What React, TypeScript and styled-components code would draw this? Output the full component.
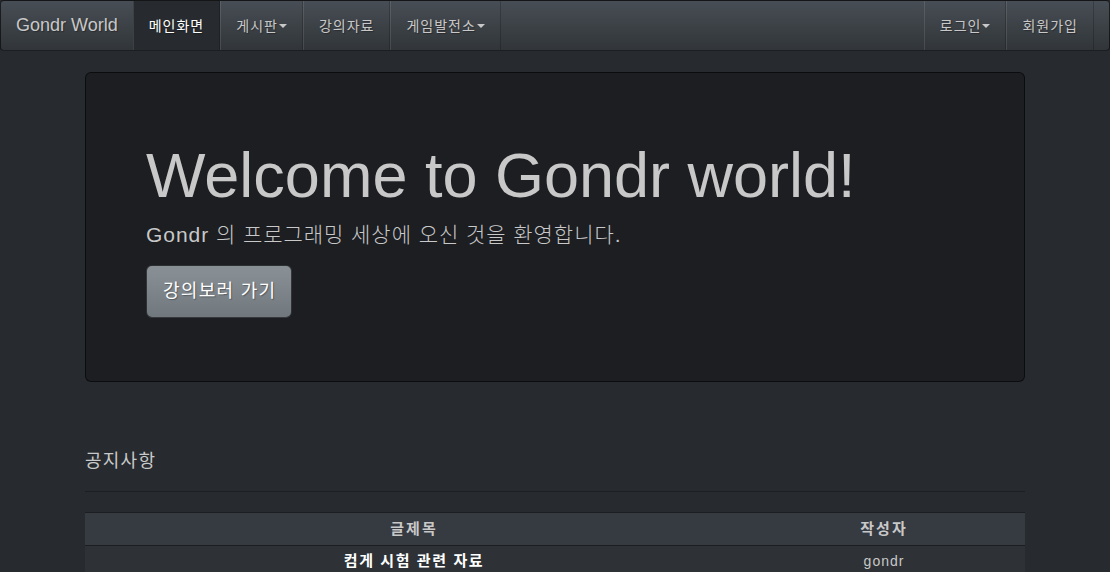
import React from "react";
import styled, { createGlobalStyle } from "styled-components";

const Global = createGlobalStyle`
  html, body { margin: 0; padding: 0; }
  body {
    background: #272b30;
    color: #c8c8c8;
    font-family: "Liberation Sans", "Noto Sans CJK KR", Arial, sans-serif;
    font-size: 14px;
    line-height: 1.42857;
  }
  * { box-sizing: border-box; }
`;

const Navbar = styled.nav`
  display: flex;
  justify-content: space-between;
  height: 51px;
  background-image: linear-gradient(#484e55, #3a3f44 60%, #313539);
  border: 1px solid rgba(0, 0, 0, 0.6);
  border-radius: 4px;
  text-shadow: 1px 1px 1px rgba(0, 0, 0, 0.3);
  padding-right: 15px;
`;

const NavGroup = styled.ul`
  display: flex;
  margin: 0;
  padding: 0;
  list-style: none;
`;

const Brand = styled.a`
  display: flex;
  align-items: center;
  height: 49px;
  padding: 0 15px;
  font-size: 18px;
  color: #c8c8c8;
  text-decoration: none;
`;

const NavItem = styled.li<{ $active?: boolean }>`
  display: flex;
  align-items: center;
  height: 49px;
  padding: 0 15px;
  border-left: 1px solid rgba(255, 255, 255, 0.1);
  border-right: 1px solid rgba(0, 0, 0, 0.2);
  color: ${(p) => (p.$active ? "#ffffff" : "#c8c8c8")};
  background: ${(p) => (p.$active ? "#272b2f" : "transparent")};
  line-height: 20px;
  font-size: 14px;
  letter-spacing: 1px;
`;

const Caret = styled.span`
  display: inline-block;
  width: 0;
  height: 0;
  margin-left: 1px;
  border-top: 4px solid currentColor;
  border-left: 4px solid transparent;
  border-right: 4px solid transparent;
  vertical-align: middle;
`;

const Container = styled.div`
  width: 940px;
  margin: 0 auto;
`;

const Jumbotron = styled.section`
  margin-top: 21px;
  background: #1c1e22;
  border: 1px solid rgba(0, 0, 0, 0.6);
  border-radius: 6px;
  padding: 48px 60px;
`;

const Title = styled.h1`
  margin: 20px 0 10px;
  font-size: 63px;
  font-weight: 500;
  line-height: 1.1;
  color: #c8c8c8;
`;

const Lead = styled.p`
  margin: 0 0 15px;
  font-size: 21px;
  font-weight: 200;
  line-height: 30px;
  letter-spacing: 0.95px;
  color: #c8c8c8;
`;

const ButtonRow = styled.p`
  margin: 0 0 15px;
`;

const BigButton = styled.a`
  display: inline-block;
  padding: 10px 15px 10px 16px;
  font-size: 18px;
  line-height: 31px;
  letter-spacing: 1.3px;
  border-radius: 6px;
  color: #fff;
  background-image: linear-gradient(#8a9196, #7a8288 60%, #70787d);
  border: 1px solid rgba(0, 0, 0, 0.6);
  text-shadow: 1px 1px 1px rgba(0, 0, 0, 0.3);
  text-decoration: none;
`;

const NoticeTitle = styled.h4`
  margin: 69px 0 0;
  font-size: 18px;
  font-weight: 400;
  line-height: 20px;
  letter-spacing: 1.25px;
  color: #c8c8c8;
`;

const Rule = styled.hr`
  margin: 20px 0 20px;
  border: 0;
  border-top: 1px solid #1c1e22;
`;

const Table = styled.table`
  width: 100%;
  border-collapse: collapse;
  border-top: 1px solid #1c1e22;
`;

const Th = styled.th<{ $w: string }>`
  width: ${(p) => p.$w};
  padding: 6px 8px;
  line-height: 20px;
  font-size: 15px;
  letter-spacing: 2px;
  background: #363a41;
  color: #c8c8c8;
  font-weight: 700;
  text-align: center;
  border-bottom: 1px solid #1c1e22;
`;

const Td = styled.td<{ $strong?: boolean }>`
  padding: 5px 8px;
  line-height: 20px;
  background: #2e3236;
  text-align: center;
  font-size: ${(p) => (p.$strong ? "15px" : "14px")};
  letter-spacing: ${(p) => (p.$strong ? "1.6px" : "1px")};
  color: ${(p) => (p.$strong ? "#ffffff" : "#c8c8c8")};
  font-weight: ${(p) => (p.$strong ? 700 : 400)};
`;

export default function App() {
  return (
    <>
      <Global />
      <Navbar>
        <NavGroup>
          <li>
            <Brand>Gondr World</Brand>
          </li>
          <NavItem $active>메인화면</NavItem>
          <NavItem>
            게시판<Caret />
          </NavItem>
          <NavItem>강의자료</NavItem>
          <NavItem>
            게임발전소<Caret />
          </NavItem>
        </NavGroup>
        <NavGroup>
          <NavItem>
            로그인<Caret />
          </NavItem>
          <NavItem>회원가입</NavItem>
        </NavGroup>
      </Navbar>
      <Container>
        <Jumbotron>
          <Title>Welcome to Gondr world!</Title>
          <Lead>Gondr 의 프로그래밍 세상에 오신 것을 환영합니다.</Lead>
          <ButtonRow>
            <BigButton>강의보러 가기</BigButton>
          </ButtonRow>
        </Jumbotron>
        <NoticeTitle>공지사항</NoticeTitle>
        <Rule />
        <Table>
          <thead>
            <tr>
              <Th $w="70%">글제목</Th>
              <Th $w="30%">작성자</Th>
            </tr>
          </thead>
          <tbody>
            <tr>
              <Td $strong>컴게 시험 관련 자료</Td>
              <Td>gondr</Td>
            </tr>
          </tbody>
        </Table>
      </Container>
    </>
  );
}
